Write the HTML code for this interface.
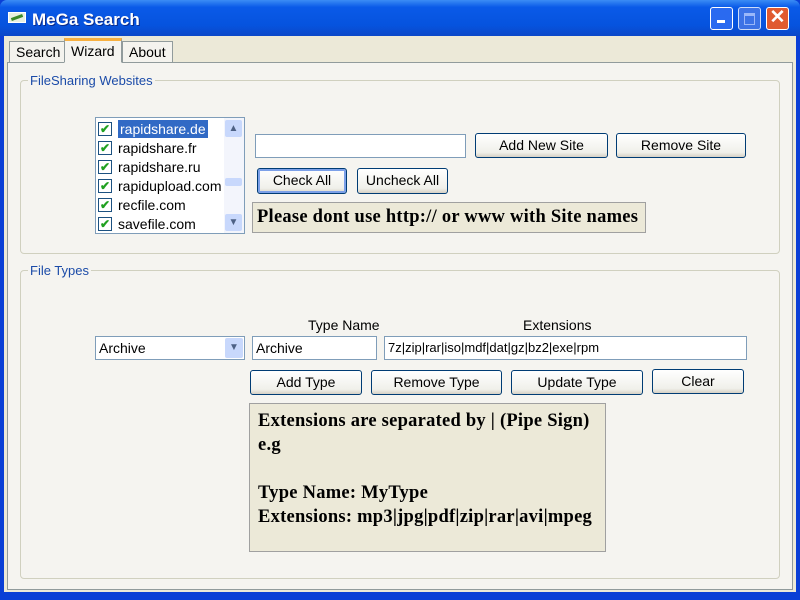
<!DOCTYPE html>
<html><head><style>
*{margin:0;padding:0;box-sizing:border-box}
body{width:800px;height:600px;overflow:hidden;background:#0a3fd6;font-family:"Liberation Sans",sans-serif;font-size:13px;position:relative}
.a{position:absolute}
.title{left:0;top:0;width:800px;height:36px;background:linear-gradient(#3b8cf5,#0a5ae8 20%,#0653de 70%,#0b48c8);border-radius:7px 7px 0 0}
.body{left:4px;top:36px;width:792px;height:556px;background:#ece9d8}
.page{left:7px;top:62px;width:786px;height:528px;background:#f5f4f0;border:1px solid #919b9c}
.tab{top:40px;height:23px;background:#f4f3ee;border:1px solid #919b9c;border-bottom:none;padding:2px 6px;font-size:14px}
.grp{border:1px solid #d0d0bf;border-radius:4px}
.lg{background:#f5f4f0;color:#1b4ba8;font-size:13px;padding:0 2px}
.btn{border:1px solid #003c74;border-radius:3px;background:linear-gradient(#fff,#f0f0ea 80%,#d6d0c5);text-align:center;font-size:14px;line-height:22px}
.tb{background:#fff;border:1px solid #7f9db9;font-size:13px;padding:3px 3px}
.lbl{background:#ece9d8;border:1px solid #a0a0a0;font-family:"Liberation Serif",serif;font-weight:bold;font-size:18.5px;letter-spacing:0.25px}
.it{left:2px;height:19px;width:124px;font-size:14px;line-height:18px;display:flex;align-items:center}
.cb{display:inline-block;width:14px;height:14px;border:1px solid #1c5180;background:#fff;color:#21a121;font-size:12px;line-height:12px;text-align:center;margin-right:6px;font-weight:bold;flex:none}
.wb{top:7px;width:23px;height:23px;border:1px solid #fff;border-radius:3px}
</style></head><body>
<div class="a title"></div>
<div class="a" style="left:8px;top:12px;width:18px;height:11px;background:#e8f0e0;border:1px solid #fff"><div style="margin:3px 2px;height:3px;background:#3a8a2a;transform:rotate(-20deg)"></div></div>
<div class="a" style="left:32px;top:10px;color:#fff;font-weight:bold;font-size:17px;text-shadow:1px 1px #0a2a8a">MeGa Search</div>
<div class="a wb" style="left:710px;background:#2a6af0"><div style="margin:12px 0 0 6px;width:8px;height:3px;background:#fff"></div></div>
<div class="a wb" style="left:738px;background:#4a7ae8;opacity:.8"><div style="margin:5px;height:12px;border:1px solid #c0d0ff;border-top-width:3px"></div></div>
<div class="a wb" style="left:766px;background:#e05a30;color:#fff;font-size:19px;text-align:center;line-height:20px;font-weight:bold">✕</div>
<div class="a body"></div>
<div class="a page"></div>
<div class="a tab" style="left:9px;top:41px;height:21px">Search</div>
<div class="a tab" style="left:64px;top:38px;height:25px;border-top:3px solid #f8b040;border-bottom:1px solid #f5f4f0;background:#f5f4f0;z-index:2">Wizard</div>
<div class="a tab" style="left:122px;top:41px;height:21px">About</div>

<div class="a grp" style="left:20px;top:80px;width:760px;height:174px"></div>
<div class="a lg" style="left:28px;top:73px">FileSharing Websites</div>
<div class="a" style="left:95px;top:117px;width:150px;height:117px;background:#fff;border:1px solid #7f9db9">
<div class="a it" style="top:1px"><span class="cb">✔</span><span style="background:#316ac5;color:#fff;padding:0 2px">rapidshare.de</span></div>
<div class="a it" style="top:20px"><span class="cb">✔</span>rapidshare.fr</div>
<div class="a it" style="top:39px"><span class="cb">✔</span>rapidshare.ru</div>
<div class="a it" style="top:58px"><span class="cb">✔</span>rapidupload.com</div>
<div class="a it" style="top:77px"><span class="cb">✔</span>recfile.com</div>
<div class="a it" style="top:96px"><span class="cb">✔</span>savefile.com</div>
<div class="a" style="left:128px;top:0;width:20px;height:115px;background:#f3f5fc">
<div class="a" style="left:1px;top:2px;width:17px;height:17px;background:#c8d8fc;border-radius:2px;color:#4d6185;text-align:center;font-size:10px;line-height:17px">▲</div>
<div class="a" style="left:1px;top:60px;width:17px;height:8px;background:#c8d8fc;border-radius:2px"></div>
<div class="a" style="left:1px;top:96px;width:17px;height:17px;background:#c8d8fc;border-radius:2px;color:#4d6185;text-align:center;font-size:10px;line-height:17px">▼</div>
</div></div>
<div class="a tb" style="left:255px;top:134px;width:211px;height:24px"></div>
<div class="a btn" style="left:475px;top:133px;width:133px;height:25px">Add New Site</div>
<div class="a btn" style="left:616px;top:133px;width:130px;height:25px">Remove Site</div>
<div class="a btn" style="left:257px;top:168px;width:90px;height:26px;box-shadow:inset 0 0 0 2px #7ca0e8">Check All</div>
<div class="a btn" style="left:357px;top:168px;width:91px;height:26px">Uncheck All</div>
<div class="a lbl" style="left:252px;top:202px;width:394px;height:31px;padding:4px 4px;white-space:nowrap">Please dont use http:// or www with Site names</div>

<div class="a grp" style="left:20px;top:270px;width:760px;height:309px"></div>
<div class="a lg" style="left:28px;top:263px">File Types</div>
<div class="a tb" style="left:95px;top:336px;width:150px;height:24px;font-size:14px">Archive<div class="a" style="right:1px;top:1px;width:18px;height:20px;background:#c8d8fc;border-radius:2px;color:#4d6185;text-align:center;font-size:10px;line-height:20px">▼</div></div>
<div class="a" style="left:308px;top:317px;font-size:14px">Type Name</div>
<div class="a" style="left:523px;top:317px;font-size:14px">Extensions</div>
<div class="a tb" style="left:252px;top:336px;width:125px;height:24px;font-size:14px">Archive</div>
<div class="a tb" style="left:384px;top:336px;width:363px;height:24px">7z|zip|rar|iso|mdf|dat|gz|bz2|exe|rpm</div>
<div class="a btn" style="left:250px;top:370px;width:112px;height:25px">Add Type</div>
<div class="a btn" style="left:371px;top:370px;width:131px;height:25px">Remove Type</div>
<div class="a btn" style="left:511px;top:370px;width:132px;height:25px">Update Type</div>
<div class="a btn" style="left:652px;top:369px;width:92px;height:25px">Clear</div>
<div class="a lbl" style="left:249px;top:403px;width:357px;height:149px;padding:5px 8px;line-height:24px;white-space:nowrap">Extensions are separated by | (Pipe Sign)<br>e.g<br><br>Type Name: MyType<br>Extensions: mp3|jpg|pdf|zip|rar|avi|mpeg</div>
</body></html>
